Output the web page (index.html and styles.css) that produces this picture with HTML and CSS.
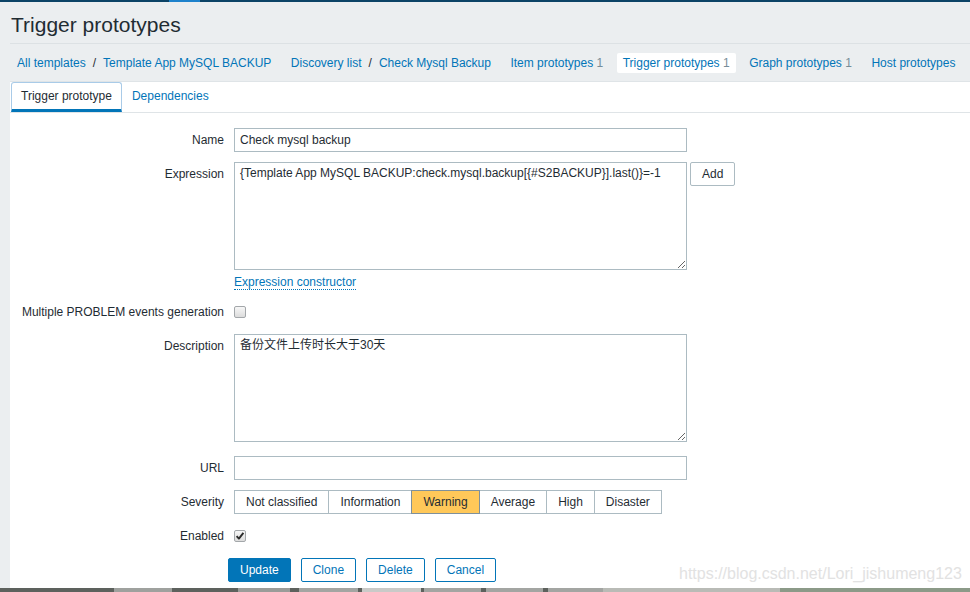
FILE: index.html
```html
<!DOCTYPE html>
<html lang="en">
<head>
<meta charset="utf-8">
<title>Trigger prototypes</title>
<link rel="stylesheet" href="styles.css">
</head>
<body>
<div class="topbar"><span class="topbar-mark"></span></div>
<div class="wrap">
  <header class="page-header"><h1>Trigger prototypes</h1></header>
  <nav class="crumbs">
    <ul>
      <li><a href="#">All templates</a><span class="sep">/</span><a href="#">Template App MySQL BACKUP</a></li>
      <li><a href="#">Discovery list</a><span class="sep">/</span><a href="#">Check Mysql Backup</a></li>
      <li><a href="#">Item prototypes</a> <span class="count">1</span></li>
      <li class="selected"><a href="#">Trigger prototypes</a> <span class="count">1</span></li>
      <li><a href="#">Graph prototypes</a> <span class="count">1</span></li>
      <li><a href="#">Host prototypes</a></li>
    </ul>
  </nav>
  <main class="panel">
    <ul class="tabs">
      <li class="tab active">Trigger prototype</li>
      <li class="tab">Dependencies</li>
    </ul>
    <form class="form">
      <div class="row">
        <label class="lbl">Name</label>
        <div class="ctl"><input class="field" type="text" value="Check mysql backup"></div>
      </div>
      <div class="row">
        <label class="lbl">Expression</label>
        <div class="ctl">
          <div class="expr">
            <textarea class="area">{Template App MySQL BACKUP:check.mysql.backup[{#S2BACKUP}].last()}=-1</textarea>
            <button type="button" class="btn-grey">Add</button>
          </div>
          <div class="constructor"><a href="#" class="dotted">Expression constructor</a></div>
        </div>
      </div>
      <div class="row">
        <label class="lbl">Multiple PROBLEM events generation</label>
        <div class="ctl center"><span class="check"></span></div>
      </div>
      <div class="row">
        <label class="lbl">Description</label>
        <div class="ctl"><textarea class="area area-desc">备份文件上传时长大于30天</textarea></div>
      </div>
      <div class="row">
        <label class="lbl">URL</label>
        <div class="ctl"><input class="field" type="text" value=""></div>
      </div>
      <div class="row">
        <label class="lbl">Severity</label>
        <div class="ctl">
          <ul class="segmented">
            <li>Not classified</li>
            <li>Information</li>
            <li class="on">Warning</li>
            <li>Average</li>
            <li>High</li>
            <li>Disaster</li>
          </ul>
        </div>
      </div>
      <div class="row">
        <label class="lbl">Enabled</label>
        <div class="ctl center"><span class="check"><svg viewBox="0 0 12 12" width="12" height="12"><path d="M2.6 6.2 L4.9 8.6 L9.4 2.8" stroke="#2b2b2b" stroke-width="1.9" fill="none" stroke-linejoin="round"/></svg></span></div>
      </div>
      <div class="actions">
        <button type="button" class="btn-main">Update</button>
        <button type="button" class="btn-alt">Clone</button>
        <button type="button" class="btn-alt">Delete</button>
        <button type="button" class="btn-alt">Cancel</button>
      </div>
    </form>
  </main>
</div>
<div class="taskbar"></div>
<div class="watermark">https://blog.csdn.net/Lori_jishumeng123</div>
</body>
</html>
```
FILE: styles.css
```css
html, body {
  margin: 0;
  padding: 0;
}
body {
  background: #ebeef0;
  font-family: "Liberation Sans", Arial, "Noto Sans CJK SC", sans-serif;
  font-size: 12px;
  color: #1f2c33;
  width: 970px;
  height: 592px;
  overflow: hidden;
  position: relative;
}
a {
  color: #0275b8;
  text-decoration: none;
}
.topbar {
  height: 2px;
  background: #0b4366;
  display: flex;
}
.topbar-mark {
  margin-left: 169px;
  width: 31px;
  background: #1e82cc;
}
.wrap {
  padding-left: 10px;
}
.page-header {
  padding: 11px 0 6px 1px;
  border-bottom: 1px solid #dce1e4;
}
.page-header h1 {
  margin: 0;
  font-size: 21px;
  line-height: 24px;
  font-weight: normal;
  color: #1f2c33;
}
.crumbs {
  padding: 9px 0 8px 1px;
  overflow: hidden;
  white-space: nowrap;
}
.crumbs ul {
  display: flex;
  gap: 7.5px;
  margin: 0;
  padding: 0;
  list-style: none;
}
.crumbs li {
  padding: 0 6px;
  line-height: 20px;
  border-radius: 2px;
  flex: none;
}
.crumbs li.selected {
  background: #ffffff;
}
.sep {
  margin: 0 7px;
  color: #1f2c33;
}
.count {
  color: #768d99;
}
.panel {
  background: #ffffff;
  border-top: 1px solid #dfe4e7;
  height: 507px;
  box-sizing: border-box;
  overflow: hidden;
}
.tabs {
  display: flex;
  margin: 0;
  padding: 0 0 0 1px;
  list-style: none;
  border-bottom: 1px solid #dfe4e7;
}
.tab {
  padding: 0 9px;
  line-height: 26px;
  border: 1px solid transparent;
  border-bottom: 3px solid transparent;
  border-radius: 3px 3px 0 0;
  color: #0275b8;
}
.tab.active {
  color: #1f2c33;
  border-color: #a9cbe8;
  border-bottom-color: #0275b8;
}
.form {
  padding-top: 10px;
}
.row {
  display: flex;
  padding: 5px 0;
}
.lbl {
  flex: none;
  width: 214px;
  padding-right: 10px;
  text-align: right;
  line-height: 24px;
  white-space: nowrap;
}
.ctl {
  display: flex;
  flex-direction: column;
}
.ctl.center {
  height: 24px;
  justify-content: center;
}
.field {
  display: block;
  width: 453px;
  height: 24px;
  box-sizing: border-box;
  border: 1px solid #acbbc2;
  padding: 0 5px;
  margin: 0;
  font: 12px "Liberation Sans", Arial, sans-serif;
  color: #1f2c33;
  background: #ffffff;
  outline: none;
}
.expr {
  display: flex;
  align-items: flex-start;
}
.area {
  display: block;
  width: 453px;
  height: 108px;
  box-sizing: border-box;
  border: 1px solid #acbbc2;
  padding: 3px 5px;
  margin: 0;
  font: 12px/14px "Liberation Sans", Arial, "Noto Sans CJK SC", sans-serif;
  color: #1f2c33;
  background: #ffffff;
  outline: none;
  resize: both;
}
.area-desc {
  margin-bottom: 4px;
}
.btn-grey {
  margin-left: 3px;
  height: 24px;
  padding: 0 11px;
  border: 1px solid #acbbc2;
  border-radius: 2px;
  background: #ffffff;
  color: #1f2c33;
  font: 12px "Liberation Sans", Arial, sans-serif;
}
.constructor {
  margin-top: 5px;
  line-height: 15px;
}
.dotted {
  border-bottom: 1px dotted #0275b8;
}
.check {
  display: block;
  width: 12px;
  height: 12px;
  box-sizing: border-box;
  border: 1px solid #a3a7aa;
  border-radius: 2px;
  background: linear-gradient(#f7f7f7, #dcdcdc);
  position: relative;
}
.check svg {
  display: block;
  margin: -1px 0 0 -1px;
}
.segmented {
  display: flex;
  margin: 0;
  padding: 0;
  list-style: none;
}
.segmented li {
  padding: 0 11px;
  line-height: 22px;
  border: 1px solid #acbbc2;
  margin-left: -1px;
  background: #ffffff;
  position: relative;
}
.segmented li:first-child {
  margin-left: 0;
}
.segmented li.on {
  background: #ffc859;
  border-color: #7f909b;
  z-index: 1;
}
.actions {
  display: flex;
  gap: 10px;
  padding: 5px 0 0 218px;
}
.btn-main, .btn-alt {
  height: 24px;
  padding: 0 11px;
  border: 1px solid #0275b8;
  border-radius: 2px;
  font: 12px "Liberation Sans", Arial, sans-serif;
}
.btn-main {
  background: #0275b8;
  color: #ffffff;
}
.btn-alt {
  background: #ffffff;
  color: #0275b8;
}
.taskbar {
  height: 4px;
  background: linear-gradient(90deg,
    #5d615d 0, #5d615d 114px,
    #9fa19e 114px, #9fa19e 172px,
    #5d615d 172px, #5d615d 238px,
    #9a9c99 238px, #9a9c99 290px,
    #5d615d 290px, #5d615d 299px,
    #a3a5a2 299px, #a3a5a2 358px,
    #5d615d 358px, #5d615d 362px,
    #c9cac8 362px, #c9cac8 421px,
    #5d615d 421px, #5d615d 424px,
    #a3a5a2 424px, #a3a5a2 481px,
    #5d615d 481px, #5d615d 486px,
    #a3a5a2 486px, #a3a5a2 543px,
    #5d615d 543px, #5d615d 548px,
    #a3a5a2 548px, #a3a5a2 603px,
    #b9bbb6 603px, #b9bbb6 780px,
    #8c9a88 780px, #8c9a88 970px);
}
.watermark {
  position: absolute;
  left: 679px;
  top: 565px;
  font: 16px/18px "Liberation Sans", Arial, sans-serif;
  color: #e2e2e2;
  white-space: nowrap;
}
```
